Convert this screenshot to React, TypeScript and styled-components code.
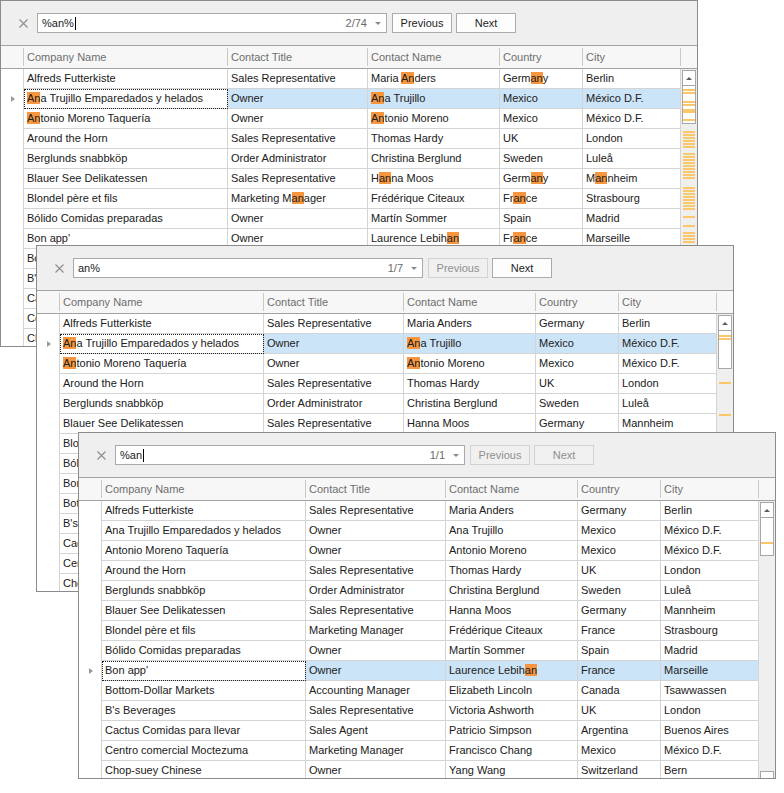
import React from "react";
import styled, { createGlobalStyle } from "styled-components";

const GlobalStyle = createGlobalStyle`
  html, body { margin: 0; padding: 0; background: #ffffff; }
  body { font-family: "Liberation Sans", Arial, sans-serif; font-size: 11px; color: #202020; }
  * { box-sizing: border-box; }
`;

const COLS = "23px 204px 140px 132px 83px 98px";

const Desktop = styled.div`
  position: relative;
  width: 784px;
  height: 793px;
  overflow: hidden;
  background: #ffffff;
`;

const Window = styled.div<{ $x: number; $y: number }>`
  position: absolute;
  left: ${(p) => p.$x}px;
  top: ${(p) => p.$y}px;
  width: 698px;
  height: 347px;
  border: 1px solid #8b8b8b;
  background: #efefef;
  display: flex;
  flex-direction: column;
  overflow: hidden;
`;

const SearchPanel = styled.div`
  height: 45px;
  flex-shrink: 0;
  display: flex;
  align-items: center;
  padding-left: 17px;
  border-bottom: 1px solid #a3a3a3;
`;

const CloseBtn = styled.div`
  width: 10px;
  height: 10px;
  display: flex;
  align-items: center;
  justify-content: center;
  margin-right: 9px;
`;

const SearchBox = styled.div`
  width: 350px;
  height: 20px;
  border: 1px solid #a9a9a9;
  background: #ffffff;
  display: flex;
  align-items: center;
  padding: 0 4px 0 4px;
  margin-right: 5px;
`;

const Query = styled.div`
  flex: 1;
  display: flex;
  align-items: center;
  color: #1a1a1a;
  white-space: nowrap;
`;

const Caret = styled.span`
  display: inline-block;
  width: 1px;
  height: 13px;
  background: #000;
  margin-left: 1px;
`;

const Counter = styled.span`
  color: #6a6a6a;
`;

const DropArrow = styled.span`
  width: 0;
  height: 0;
  border-left: 3px solid transparent;
  border-right: 3px solid transparent;
  border-top: 3px solid #8a8a8a;
  margin-left: 8px;
  margin-right: 1px;
`;

const Button = styled.div<{ $disabled?: boolean }>`
  width: 60px;
  height: 20px;
  display: flex;
  align-items: center;
  justify-content: center;
  border: 1px solid ${(p) => (p.$disabled ? "#d2d2d2" : "#acacac")};
  background: ${(p) => (p.$disabled ? "#f0f0f0" : "#fdfdfd")};
  color: ${(p) => (p.$disabled ? "#8f8f8f" : "#1e1e1e")};
  margin-right: 4px;
`;

const HeaderRow = styled.div`
  display: grid;
  grid-template-columns: ${COLS} 16px;
  height: 23px;
  flex-shrink: 0;
  background: #f7f7f7;
  border-bottom: 1px solid #a3a3a3;
`;

const HeaderCell = styled.div<{ $divider?: boolean }>`
  height: 22px;
  line-height: 22px;
  padding-left: 3px;
  color: #6e6e6e;
  white-space: nowrap;
  overflow: hidden;
  background: ${(p) =>
    p.$divider
      ? "linear-gradient(#c9c9c9, #c9c9c9) right 2px / 1px calc(100% - 4px) no-repeat"
      : "none"};
`;

const Body = styled.div`
  flex: 1;
  display: flex;
  overflow: hidden;
`;

const RowsArea = styled.div`
  width: 680px;
  flex-shrink: 0;
  background: #ffffff;
`;

const Row = styled.div`
  display: grid;
  grid-template-columns: ${COLS};
  height: 20px;
`;

const Indicator = styled.div`
  border-right: 1px solid #d4d4d4;
  background: #ffffff;
  display: flex;
  align-items: center;
  justify-content: center;
  padding-left: 1px;
`;

const RowArrow = styled.span`
  width: 0;
  height: 0;
  border-top: 3.5px solid transparent;
  border-bottom: 3.5px solid transparent;
  border-left: 4px solid #9a9a9a;
`;

const Cell = styled.div<{ $sel?: boolean; $focus?: boolean }>`
  border-right: 1px solid #d4d4d4;
  border-bottom: 1px solid #d4d4d4;
  background: ${(p) => (p.$focus ? "#ffffff" : p.$sel ? "#cce4f7" : "#ffffff")};
  outline: ${(p) => (p.$focus ? "1px dotted #222" : "none")};
  outline-offset: -1px;
  padding-left: 3px;
  line-height: 19px;
  white-space: nowrap;
  overflow: hidden;
  color: #202020;
`;

const Hit = styled.span`
  background: #f7963e;
`;

const Scrollbar = styled.div`
  position: relative;
  width: 16px;
  height: 286px;
  flex-shrink: 0;
  background: #efefef;
  display: flex;
  flex-direction: column;
  padding: 1px 1px 0 1px;
`;

const ScrollBtn = styled.div`
  height: 16px;
  border: 1px solid #a7a7a7;
  background: #ffffff;
  display: flex;
  align-items: center;
  justify-content: center;
  flex-shrink: 0;
`;

const UpGlyph = styled.span`
  width: 0;
  height: 0;
  border-left: 3px solid transparent;
  border-right: 3px solid transparent;
  border-bottom: 3px solid #5e5e5e;
`;

const DownGlyph = styled.span`
  width: 0;
  height: 0;
  border-left: 3px solid transparent;
  border-right: 3px solid transparent;
  border-top: 3px solid #5e5e5e;
`;

const Thumb = styled.div`
  height: 38px;
  border: 1px solid #a7a7a7;
  border-top: none;
  background: #ffffff;
  flex-shrink: 0;
`;

const Track = styled.div`
  flex: 1;
`;

const Marks = styled.svg`
  position: absolute;
  left: 0;
  top: 0;
  pointer-events: none;
`;

type Mode = "contains" | "starts" | "ends";

const rows: string[][] = [
  ["Alfreds Futterkiste", "Sales Representative", "Maria Anders", "Germany", "Berlin"],
  ["Ana Trujillo Emparedados y helados", "Owner", "Ana Trujillo", "Mexico", "México D.F."],
  ["Antonio Moreno Taquería", "Owner", "Antonio Moreno", "Mexico", "México D.F."],
  ["Around the Horn", "Sales Representative", "Thomas Hardy", "UK", "London"],
  ["Berglunds snabbköp", "Order Administrator", "Christina Berglund", "Sweden", "Luleå"],
  ["Blauer See Delikatessen", "Sales Representative", "Hanna Moos", "Germany", "Mannheim"],
  ["Blondel père et fils", "Marketing Manager", "Frédérique Citeaux", "France", "Strasbourg"],
  ["Bólido Comidas preparadas", "Owner", "Martín Sommer", "Spain", "Madrid"],
  ["Bon app'", "Owner", "Laurence Lebihan", "France", "Marseille"],
  ["Bottom-Dollar Markets", "Accounting Manager", "Elizabeth Lincoln", "Canada", "Tsawwassen"],
  ["B's Beverages", "Sales Representative", "Victoria Ashworth", "UK", "London"],
  ["Cactus Comidas para llevar", "Sales Agent", "Patricio Simpson", "Argentina", "Buenos Aires"],
  ["Centro comercial Moctezuma", "Marketing Manager", "Francisco Chang", "Mexico", "México D.F."],
  ["Chop-suey Chinese", "Owner", "Yang Wang", "Switzerland", "Bern"],
];

const headers = ["Company Name", "Contact Title", "Contact Name", "Country", "City"];

function highlight(text: string, mode: Mode, needle = "an"): React.ReactNode {
  const lower = text.toLowerCase();
  let idx = -1;
  if (mode === "contains") idx = lower.indexOf(needle);
  else if (mode === "starts") idx = lower.startsWith(needle) ? 0 : -1;
  else idx = lower.endsWith(needle) ? lower.length - needle.length : -1;
  if (idx < 0) return text;
  return (
    <>
      {text.slice(0, idx)}
      <Hit>{text.slice(idx, idx + needle.length)}</Hit>
      {text.slice(idx + needle.length)}
    </>
  );
}

const CloseIcon = () => (
  <svg width="9" height="9" viewBox="0 0 9 9">
    <path d="M0.5 0.5 L8.5 8.5 M8.5 0.5 L0.5 8.5" stroke="#8c8c8c" strokeWidth="1.1" fill="none" />
  </svg>
);

type Config = {
  x: number;
  y: number;
  query: string;
  counter: string;
  mode: Mode;
  focus: number;
  caret: boolean;
  prevDisabled: boolean;
  nextDisabled: boolean;
  marks: number[];
};

const windows: Config[] = [
  {
    x: 0,
    y: 0,
    query: "%an%",
    counter: "2/74",
    mode: "contains",
    focus: 1,
    caret: true,
    prevDisabled: false,
    nextDisabled: false,
    marks: [
      20, 23, 32, 35, 40, 42, 50, 62, 65, 68, 71, 74, 77, 84, 87, 90, 93, 96, 99, 102, 105, 108,
      118, 121, 124, 127, 130, 133, 136, 139, 147, 156, 163, 166, 169, 172, 180, 186, 192, 200,
    ],
  },
  {
    x: 36,
    y: 245,
    query: "an%",
    counter: "1/7",
    mode: "starts",
    focus: 1,
    caret: false,
    prevDisabled: true,
    nextDisabled: false,
    marks: [21, 24, 68, 100],
  },
  {
    x: 78,
    y: 432,
    query: "%an",
    counter: "1/1",
    mode: "ends",
    focus: 8,
    caret: true,
    prevDisabled: true,
    nextDisabled: true,
    marks: [41],
  },
];

const GridWindow: React.FC<{ c: Config }> = ({ c }) => (
  <Window $x={c.x} $y={c.y}>
    <SearchPanel>
      <CloseBtn>
        <CloseIcon />
      </CloseBtn>
      <SearchBox>
        <Query>
          {c.query}
          {c.caret && <Caret />}
        </Query>
        <Counter>{c.counter}</Counter>
        <DropArrow />
      </SearchBox>
      <Button $disabled={c.prevDisabled}>Previous</Button>
      <Button $disabled={c.nextDisabled}>Next</Button>
    </SearchPanel>
    <HeaderRow>
      <HeaderCell $divider />
      {headers.map((h) => (
        <HeaderCell key={h} $divider>
          {h}
        </HeaderCell>
      ))}
      <HeaderCell />
    </HeaderRow>
    <Body>
      <RowsArea>
        {rows.map((r, i) => (
          <Row key={i}>
            <Indicator>{i === c.focus && <RowArrow />}</Indicator>
            {r.map((v, j) => (
              <Cell key={j} $sel={i === c.focus} $focus={i === c.focus && j === 0}>
                {highlight(v, c.mode)}
              </Cell>
            ))}
          </Row>
        ))}
      </RowsArea>
      <Scrollbar>
        <ScrollBtn>
          <UpGlyph />
        </ScrollBtn>
        <Thumb />
        <Track />
        <ScrollBtn>
          <DownGlyph />
        </ScrollBtn>
        <Marks width={16} height={286}>
          {c.marks.map((m) => (
            <rect key={m} x={2} y={m} width={12} height={2} fill="#fcc76a" />
          ))}
        </Marks>
      </Scrollbar>
    </Body>
  </Window>
);

export default function App() {
  return (
    <>
      <GlobalStyle />
      <Desktop>
        {windows.map((w, i) => (
          <GridWindow key={i} c={w} />
        ))}
      </Desktop>
    </>
  );
}
